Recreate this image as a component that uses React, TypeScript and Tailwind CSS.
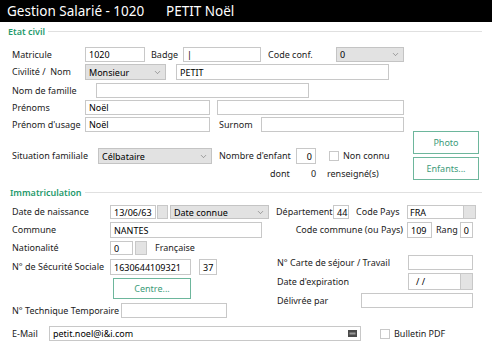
import { ChevronDown } from "lucide-react";
import type { ReactNode } from "react";

function Input({ w, h = "h-full", value, children, right }: { w: string; h?: string; value?: string; children?: ReactNode; right?: boolean }) {
  return (
    <div className={`${w} ${h} border border-[#c8c8c8] bg-white flex items-center px-[3px] text-black overflow-hidden relative ${right ? "justify-end" : ""}`}>
      <span className="leading-none whitespace-nowrap">{value}</span>
      {children}
    </div>
  );
}

function Select({ w, value }: { w: string; value: string }) {
  return (
    <div className={`${w} h-full border border-[#c4c4c4] bg-[#e2e2e2] flex items-center justify-between px-[3px] text-black`}>
      <span className="leading-none whitespace-nowrap">{value}</span>
      <ChevronDown size={9} strokeWidth={1.5} className="text-[#666]" />
    </div>
  );
}

function PickBtn({ w = "w-[11px]" }: { w?: string }) {
  return <div className={`${w} h-full border border-[#c8c8c8] bg-[#e3e3e3]`} />;
}

function Check() {
  return <div className="w-[10px] h-[10px] border border-[#c8c8c8] bg-white" />;
}

function Btn({ w, h, label }: { w: string; h: string; label: string }) {
  return (
    <div className={`${w} ${h} border border-[#6db69c] bg-white flex items-center justify-center text-[#3c9b79]`}>
      {label}
    </div>
  );
}

function Section({ title, pl }: { title: string; pl: string }) {
  return (
    <div className={`h-[12px] flex items-center ${pl} pr-[10px]`}>
      <span className="text-[#1f9a6c] font-semibold leading-none">{title}</span>
      <div className="flex-1 h-px bg-[#e0e0e0] ml-[3px]" />
    </div>
  );
}

export default function App() {
  return (
    <div
      className="w-[492px] h-[343px] overflow-hidden bg-white text-[9px] text-[#222] whitespace-nowrap"
      style={{ fontFamily: '"Noto Sans", "Open Sans", sans-serif' }}
    >
      <div className="h-[22px] bg-black text-white text-[13.5px] flex items-center pl-[7px]">
        <span className="w-[159px] shrink-0">Gestion Salarié - 1020</span>
        <span>PETIT Noël</span>
      </div>

      <div className="mt-[3px]">
        <Section title="Etat civil" pl="pl-[8px]" />
      </div>

      <div className="pl-[12px]">
        <div className="mt-[10px] h-[15px] flex items-center">
          <span className="w-[73px]">Matricule</span>
          <Input w="w-[60px]" value="1020" />
          <span className="ml-[6px] w-[32px]">Badge</span>
          <Input w="w-[78px]" value="|" />
          <span className="ml-[7px] w-[68px]">Code conf.</span>
          <Select w="w-[68px]" value="0" />
        </div>
        <div className="mt-[2px] h-[16px] flex items-center">
          <span className="w-[73px]">Civilité /&nbsp; Nom</span>
          <Select w="w-[81px]" value="Monsieur" />
          <Input w="w-[213px] ml-[10px]" value="PETIT" />
        </div>
        <div className="mt-[3px] h-[15px] flex items-center">
          <span className="w-[84px]">Nom de famille</span>
          <Input w="w-[213px]" />
        </div>
        <div className="mt-[2px] h-[15px] flex items-center">
          <span className="w-[73px]">Prénoms</span>
          <Input w="w-[125px]" value="Noël" />
          <Input w="w-[187px] ml-[7px]" />
        </div>
        <div className="mt-[2px] h-[15px] flex items-center">
          <span className="w-[73px]">Prénom d'usage</span>
          <Input w="w-[125px]" value="Noël" />
          <span className="ml-[9px] w-[42px]">Surnom</span>
          <Input w="w-[143px]" />
        </div>
      </div>

      <div className="-mt-px flex">
        <div className="w-[413px] pl-[12px]">
          <div className="mt-[17px] h-[16px] flex items-center">
            <span className="w-[86px]">Situation familiale</span>
            <Select w="w-[114px]" value="Célbataire" />
            <span className="ml-[7px] w-[77px]">Nombre d'enfant</span>
            <Input w="w-[20px]" value="0" right />
            <div className="ml-[13px]">
              <Check />
            </div>
            <span className="ml-[4px]">Non connu</span>
          </div>
          <div className="mt-[4px] h-[12px] flex items-center">
            <span className="ml-[258px] w-[41px]">dont</span>
            <span className="w-[16px]">0</span>
            <span>renseigné(s)</span>
          </div>
        </div>
        <div className="flex flex-col gap-[3px]">
          <Btn w="w-[66px]" h="h-[23px]" label="Photo" />
          <Btn w="w-[66px]" h="h-[23px]" label="Enfants..." />
        </div>
      </div>

      <div className="mt-[6px]">
        <Section title="Immatriculation" pl="pl-[10px]" />
      </div>

      <div className="pl-[12px]">
        <div className="mt-[7px] h-[14px] flex items-center">
          <span className="w-[98px]">Date de naissance</span>
          <Input w="w-[46px]" value="13/06/63" />
          <div className="ml-px h-full">
            <PickBtn />
          </div>
          <div className="ml-[2px] h-full">
            <Select w="w-[99px]" value="Date connue" />
          </div>
          <span className="ml-[7px] w-[57px]">Département</span>
          <Input w="w-[16px]" value="44" />
          <span className="ml-[7px] w-[51px]">Code Pays</span>
          <div className="w-[69px] h-full flex border border-[#c8c8c8]">
            <span className="flex-1 flex items-center px-[2px] leading-none text-black">FRA</span>
            <div className="w-[12px] h-full bg-[#e3e3e3] border-l border-[#c8c8c8]" />
          </div>
        </div>
        <div className="mt-[3px] h-[16px] flex items-center">
          <span className="w-[98px]">Commune</span>
          <Input w="w-[152px]" value="NANTES" />
          <span className="ml-[28px] w-[117px] text-right pr-[4px]">Code commune (ou Pays)</span>
          <Input w="w-[25px]" value="109" />
          <span className="ml-[4px] w-[24px]">Rang</span>
          <Input w="w-[13px]" value="0" right />
        </div>
        <div className="mt-[3px] h-[14px] flex items-center">
          <span className="w-[98px]">Nationalité</span>
          <Input w="w-[23px]" value="0" />
          <div className="ml-[2px] h-full">
            <PickBtn w="w-[12px]" />
          </div>
          <span className="ml-[8px]">Française</span>
        </div>

        <div className="flex">
          <div className="w-[265px]">
            <div className="mt-[4px] h-[16px] flex items-center">
              <span className="w-[98px]">N° de Sécurité Sociale</span>
              <Input w="w-[81px]" value="1630644109321" />
              <Input w="w-[18px] ml-[8px]" value="37" />
            </div>
            <div className="mt-[3px] ml-[101px]">
              <Btn w="w-[78px]" h="h-[21px]" label="Centre..." />
            </div>
            <div className="mt-[4px] h-[15px] flex items-center">
              <span className="w-[109px]">N° Technique Temporaire</span>
              <Input w="w-[106px]" />
            </div>
          </div>
          <div>
            <div className="h-[15px] flex items-center">
              <span className="w-[131px]">N° Carte de séjour / Travail</span>
              <Input w="w-[65px]" />
            </div>
            <div className="mt-[3px] h-[17px] flex items-center">
              <span className="w-[131px]">Date d'expiration</span>
              <div className="w-[65px] h-full flex border border-[#c8c8c8]">
                <span className="flex-1 flex items-center pl-[7px] leading-none text-black">/ /</span>
                <div className="w-[12px] h-full bg-[#e3e3e3] border-l border-[#c8c8c8]" />
              </div>
            </div>
            <div className="mt-[3px] h-[15px] flex items-center">
              <span className="w-[84px]">Délivrée par</span>
              <Input w="w-[112px]" />
            </div>
          </div>
        </div>

        <div className="mt-[8px] h-[15px] flex items-center">
          <span className="w-[37px]">E-Mail</span>
          <Input w="w-[312px]" value="petit.noel@i&i.com">
            <svg className="absolute right-[3px] top-[3px]" width="9" height="7" viewBox="0 0 9 7">
              <rect x="0" y="0" width="9" height="7" fill="#4a4a4a" />
              <rect x="1.5" y="2.5" width="6" height="2" fill="#9a9a9a" />
            </svg>
          </Input>
          <div className="ml-[19px]">
            <Check />
          </div>
          <span className="ml-[4px]">Bulletin PDF</span>
        </div>
      </div>
    </div>
  );
}
